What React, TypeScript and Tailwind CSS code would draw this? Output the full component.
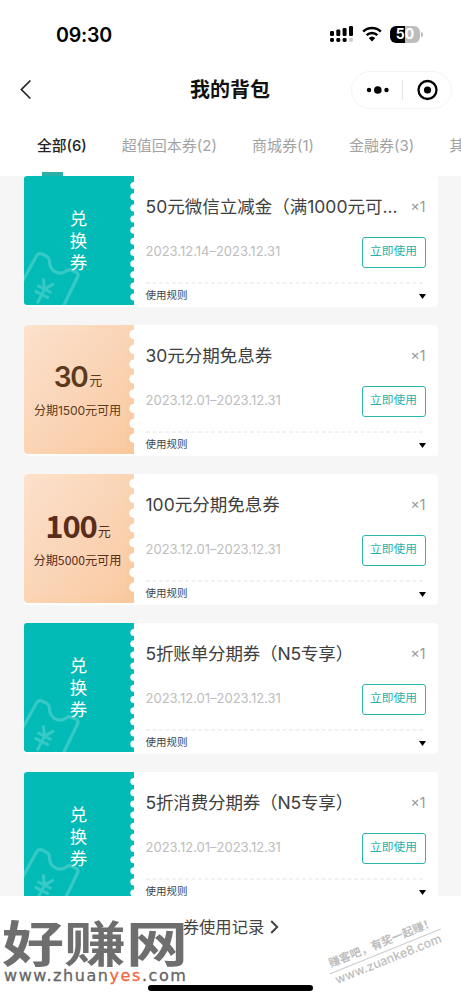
import clsx from "clsx";

interface Coupon {
  title: string;
  date: string;
  amount?: string;
  limit?: string;
  bold?: boolean;
}

const coupons: Coupon[] = [
  { title: "50元微信立减金（满1000元可...", date: "2023.12.14–2023.12.31" },
  {
    title: "30元分期免息券",
    date: "2023.12.01–2023.12.31",
    amount: "30",
    limit: "分期1500元可用",
  },
  {
    title: "100元分期免息券",
    date: "2023.12.01–2023.12.31",
    amount: "100",
    limit: "分期5000元可用",
    bold: true,
  },
  { title: "5折账单分期券（N5专享）", date: "2023.12.01–2023.12.31" },
  { title: "5折消费分期券（N5专享）", date: "2023.12.01–2023.12.31" },
];

const tabs = ["全部(6)", "超值回本券(2)", "商城券(1)", "金融券(3)", "其"];

function StatusBar() {
  return (
    <div className="flex h-[68px] items-center pl-14 pr-[38px]">
      <span className="pt-px text-[19.6px] font-semibold leading-6 tracking-[-0.2px]">
        09:30
      </span>
      <div className="ml-auto flex items-center">
        <svg width="24" height="18" viewBox="0 0 24 18" fill="#000">
          <rect x="0" y="6" width="4" height="5" rx="1.2" />
          <rect x="6.3" y="4.5" width="4" height="6.5" rx="1.2" />
          <rect x="12.6" y="3" width="4" height="8" rx="1.2" />
          <rect x="19" y="1" width="4" height="10" rx="1.2" />
          <rect x="0" y="13" width="4" height="4" rx="1.4" />
          <rect x="6.3" y="13" width="4" height="4" rx="1.4" />
          <rect x="12.6" y="13" width="4" height="4" rx="1.4" />
          <rect x="19" y="13" width="4" height="4" rx="1.4" fill="#ccc" />
        </svg>
        <svg className="ml-2" width="20" height="16" viewBox="0 0 20 16" fill="none">
          <path d="M1.2 5.6a12.6 12.6 0 0 1 17.6 0" stroke="#000" strokeWidth="2.6" />
          <path d="M4.6 9.2a7.8 7.8 0 0 1 10.8 0" stroke="#000" strokeWidth="2.5" />
          <path d="M10 15.4 6.7 12a4.8 4.8 0 0 1 6.6 0z" fill="#000" />
        </svg>
        <div className="ml-[8px] flex h-[17px] w-[30px] items-center justify-center rounded-[6px] bg-linear-to-r from-black from-50% to-[#bdbdbd] to-50% text-[14px] font-bold leading-none text-white">
          50
        </div>
        <div className="ml-px h-[5px] w-[2px] rounded-r-full bg-[#bdbdbd]" />
      </div>
    </div>
  );
}

function NavBar() {
  return (
    <div className="flex h-[43px] items-center justify-between pl-[19px] pr-[9px]">
      <svg width="90" height="22" viewBox="0 0 90 22" fill="none">
        <path d="M11.4 1.500 2.400 10.500l9 9" stroke="#222" strokeWidth="1.7" />
      </svg>
      <h1 className="text-[20px] font-bold leading-7 text-[#111]">我的背包</h1>
      <div className="flex h-[38px] w-[101px] items-center rounded-full border border-[#f4f4f4]">
        <svg width="99" height="24" viewBox="0 0 99 24" fill="#000">
          <circle cx="17" cy="12" r="2.2" />
          <circle cx="25.8" cy="12" r="3.8" />
          <circle cx="34.5" cy="12" r="2.2" />
          <path d="M50.5 2v20" stroke="#e6e6e6" />
          <circle cx="75.5" cy="12" r="9" fill="none" stroke="#000" strokeWidth="2.3" />
          <circle cx="75.5" cy="12" r="3.6" />
        </svg>
      </div>
    </div>
  );
}

function Tabs() {
  return (
    <div className="relative flex h-[65px] gap-[35px] overflow-hidden whitespace-nowrap pl-[37px] pt-[23px] text-[15px] leading-6 text-[#a3a3a3]">
      {tabs.map((tab, i) => (
        <span
          key={tab}
          className={clsx(
            "shrink-0",
            i === 0 && "text-[14.8px] font-medium text-[#222]"
          )}
        >
          {tab}
        </span>
      ))}
      <div className="absolute bottom-0 left-[42px] h-[4px] w-[21px] bg-[#2bafa9]" />
    </div>
  );
}

function Notches({ count, step, r }: { count: number; step: number; r: number }) {
  return (
    <svg className="absolute right-0 top-0" width="8" height="129" viewBox="0 0 8 129" fill="#fff">
      {Array.from({ length: count }, (_, i) => (
        <circle key={i} cx="7.8" cy={9.6 + i * step} r={r} />
      ))}
    </svg>
  );
}

function ExchangeTicket() {
  return (
    <div className="relative flex h-[129px] w-[110px] shrink-0 flex-col items-center overflow-hidden rounded-l-[3px] bg-[#02bbb7] pt-[32px] text-[17.5px] leading-[22px] text-white">
      <svg
        className="absolute left-0 top-[74px]"
        width="60"
        height="55"
        viewBox="0 0 60 55"
        fill="none"
        stroke="#36c9c5"
        strokeWidth="3.2"
        strokeLinejoin="round"
      >
        <path d="M-3 34 12.500 6Q14.500 2.500 18 4L23 6.500Q25.500 8 25.500 12C26 22 36 26 43 20.500Q45 19 47 20L52 22Q55 24 53.500 27L39 57" />
        <path
          d="M-6-10 0-1 6-10M-8-1H8M-8 5H8M0-1V15"
          transform="translate(20 40) rotate(27)"
          strokeWidth="3"
        />
      </svg>
      <span className="relative">兑</span>
      <span className="relative">换</span>
      <span className="relative">券</span>
      <Notches count={11} step={11.15} r={3.5} />
    </div>
  );
}

function AmountTicket({ amount, limit, bold }: Coupon) {
  return (
    <div
      className={clsx(
        "relative flex h-[129px] w-[110px] shrink-0 flex-col items-center rounded-l-[4px] bg-linear-to-br from-[#fde2cc] to-[#f9c79b]",
        bold ? "text-[#5a2c1c]" : "text-[#5b3a1e]"
      )}
    >
      <div className="absolute inset-y-[6px] left-[6px] right-[8px] rounded-[3px] bg-linear-to-br from-[#fbdfca] via-[#fad5b7] to-[#facba3]" />
      <div className="relative mt-[34px] flex h-[36px] items-baseline justify-center leading-[36px]">
        <span
          className={clsx(
            bold
              ? "relative -top-px font-['Noto_Sans_CJK_SC',sans-serif] text-[31px] font-bold tracking-[-1.2px]"
              : "text-[28px] font-semibold tracking-[-1.5px]"
          )}
        >
          {amount}
        </span>
        <span
          className={clsx(
            "relative text-[13px]",
            bold ? "-top-[3px] -left-px ml-[2px]" : "-top-[2px] -left-px ml-[3px]"
          )}
        >
          元
        </span>
      </div>
      <span
        className={clsx(
          "relative mt-[7px] whitespace-nowrap leading-[18px]",
          bold
            ? "-left-px font-['Noto_Sans_CJK_SC',sans-serif] text-[12.2px]"
            : "-left-px text-[12.1px] tracking-[-0.1px]"
        )}
      >
        {limit}
      </span>
      <Notches count={8} step={14.8} r={4.6} />
    </div>
  );
}

function CouponCard(props: Coupon) {
  const { title, date, amount } = props;
  return (
    <div className="flex h-[131px] w-[414px] shrink-0 rounded-[4px] bg-white">
      {amount ? <AmountTicket {...props} /> : <ExchangeTicket />}
      <div className="flex flex-1 flex-col pl-3 pr-3">
        <div className="flex h-[61px] items-center justify-between whitespace-nowrap">
          <span
            className={clsx(
              "pt-px text-[17.5px] text-[#404040]",
              title.includes("N5") && "tracking-[-0.15px]"
            )}
          >
            {title}
          </span>
          <span className="text-[14px] text-[#999]">×1</span>
        </div>
        <div className="flex h-[30px] items-center justify-between">
          <span className="text-[13px] text-[#bdbdbd]">{date}</span>
          <button className="h-[31px] w-[64px] rounded-[3px] border border-[#2bb3ae] text-[11.7px] text-[#1fb1ab]">
            立即使用
          </button>
        </div>
        <svg className="mt-[15px]" width="280" height="2" viewBox="0 0 280 2">
          <path d="M0 1h280" stroke="#e4e4e4" strokeDasharray="4 2.500" />
        </svg>
        <div className="flex h-[23px] items-center justify-between pt-px text-[10.5px] text-[#444]">
          <span>使用规则</span>
          <svg width="7" height="5" viewBox="0 0 7 5">
            <path d="M0 0h7L3.500 5z" fill="#000" />
          </svg>
        </div>
      </div>
    </div>
  );
}

function Footer() {
  return (
    <div className="relative h-[104px] overflow-hidden bg-white">
      <div className="flex items-center justify-center pl-[1px] pt-[19px] text-[16.3px] leading-6 text-[#444]">
        <span>券使用记录</span>
        <svg className="ml-[6px]" width="9" height="14" viewBox="0 0 9 14" fill="none">
          <path d="m1.200 1 6 6-6 6" stroke="#444" strokeWidth="2" />
        </svg>
      </div>
      <div className="absolute bottom-[9px] left-[148px] h-[6px] w-[165px] rounded-full bg-black" />

      {/* site stamps */}
      <div className="absolute left-[2px] top-[20px] origin-top-left scale-y-[0.79] whitespace-nowrap font-['Noto_Sans_CJK_SC',sans-serif] text-[62px] font-bold leading-[62px] text-[#6e6e6e]">
        好赚网
      </div>
      <div className="absolute left-[4px] top-[70px] whitespace-nowrap font-['DejaVu_Sans',sans-serif] text-[16px] leading-[20px] tracking-[1.56px] text-[#666] [-webkit-text-stroke:0.3px]">
        www.zhuan<span className="text-[#f0683f]">yes</span>.com
      </div>
      <div className="absolute left-[325px] top-[38px] w-[120px] origin-center rotate-[-22deg] whitespace-nowrap text-center text-[#bdbdbd]">
        <div className="border-b border-[#ccc] text-[11.3px] font-bold leading-[17px]">
          赚客吧，有奖一起赚！
        </div>
        <div className="text-[12.4px] font-medium leading-[16px]">www.zuanke8.com</div>
      </div>
    </div>
  );
}

export default function App() {
  return (
    <div className="flex h-[1000px] w-[461px] flex-col overflow-hidden bg-white font-['Inter','Noto_Sans_CJK_SC',sans-serif]">
      <StatusBar />
      <NavBar />
      <Tabs />
      <div className="flex h-[720px] shrink-0 flex-col items-center gap-[18px] overflow-hidden bg-[#f6f6f6]">
        {coupons.map((coupon) => (
          <CouponCard key={coupon.title} {...coupon} />
        ))}
      </div>
      <Footer />
    </div>
  );
}
